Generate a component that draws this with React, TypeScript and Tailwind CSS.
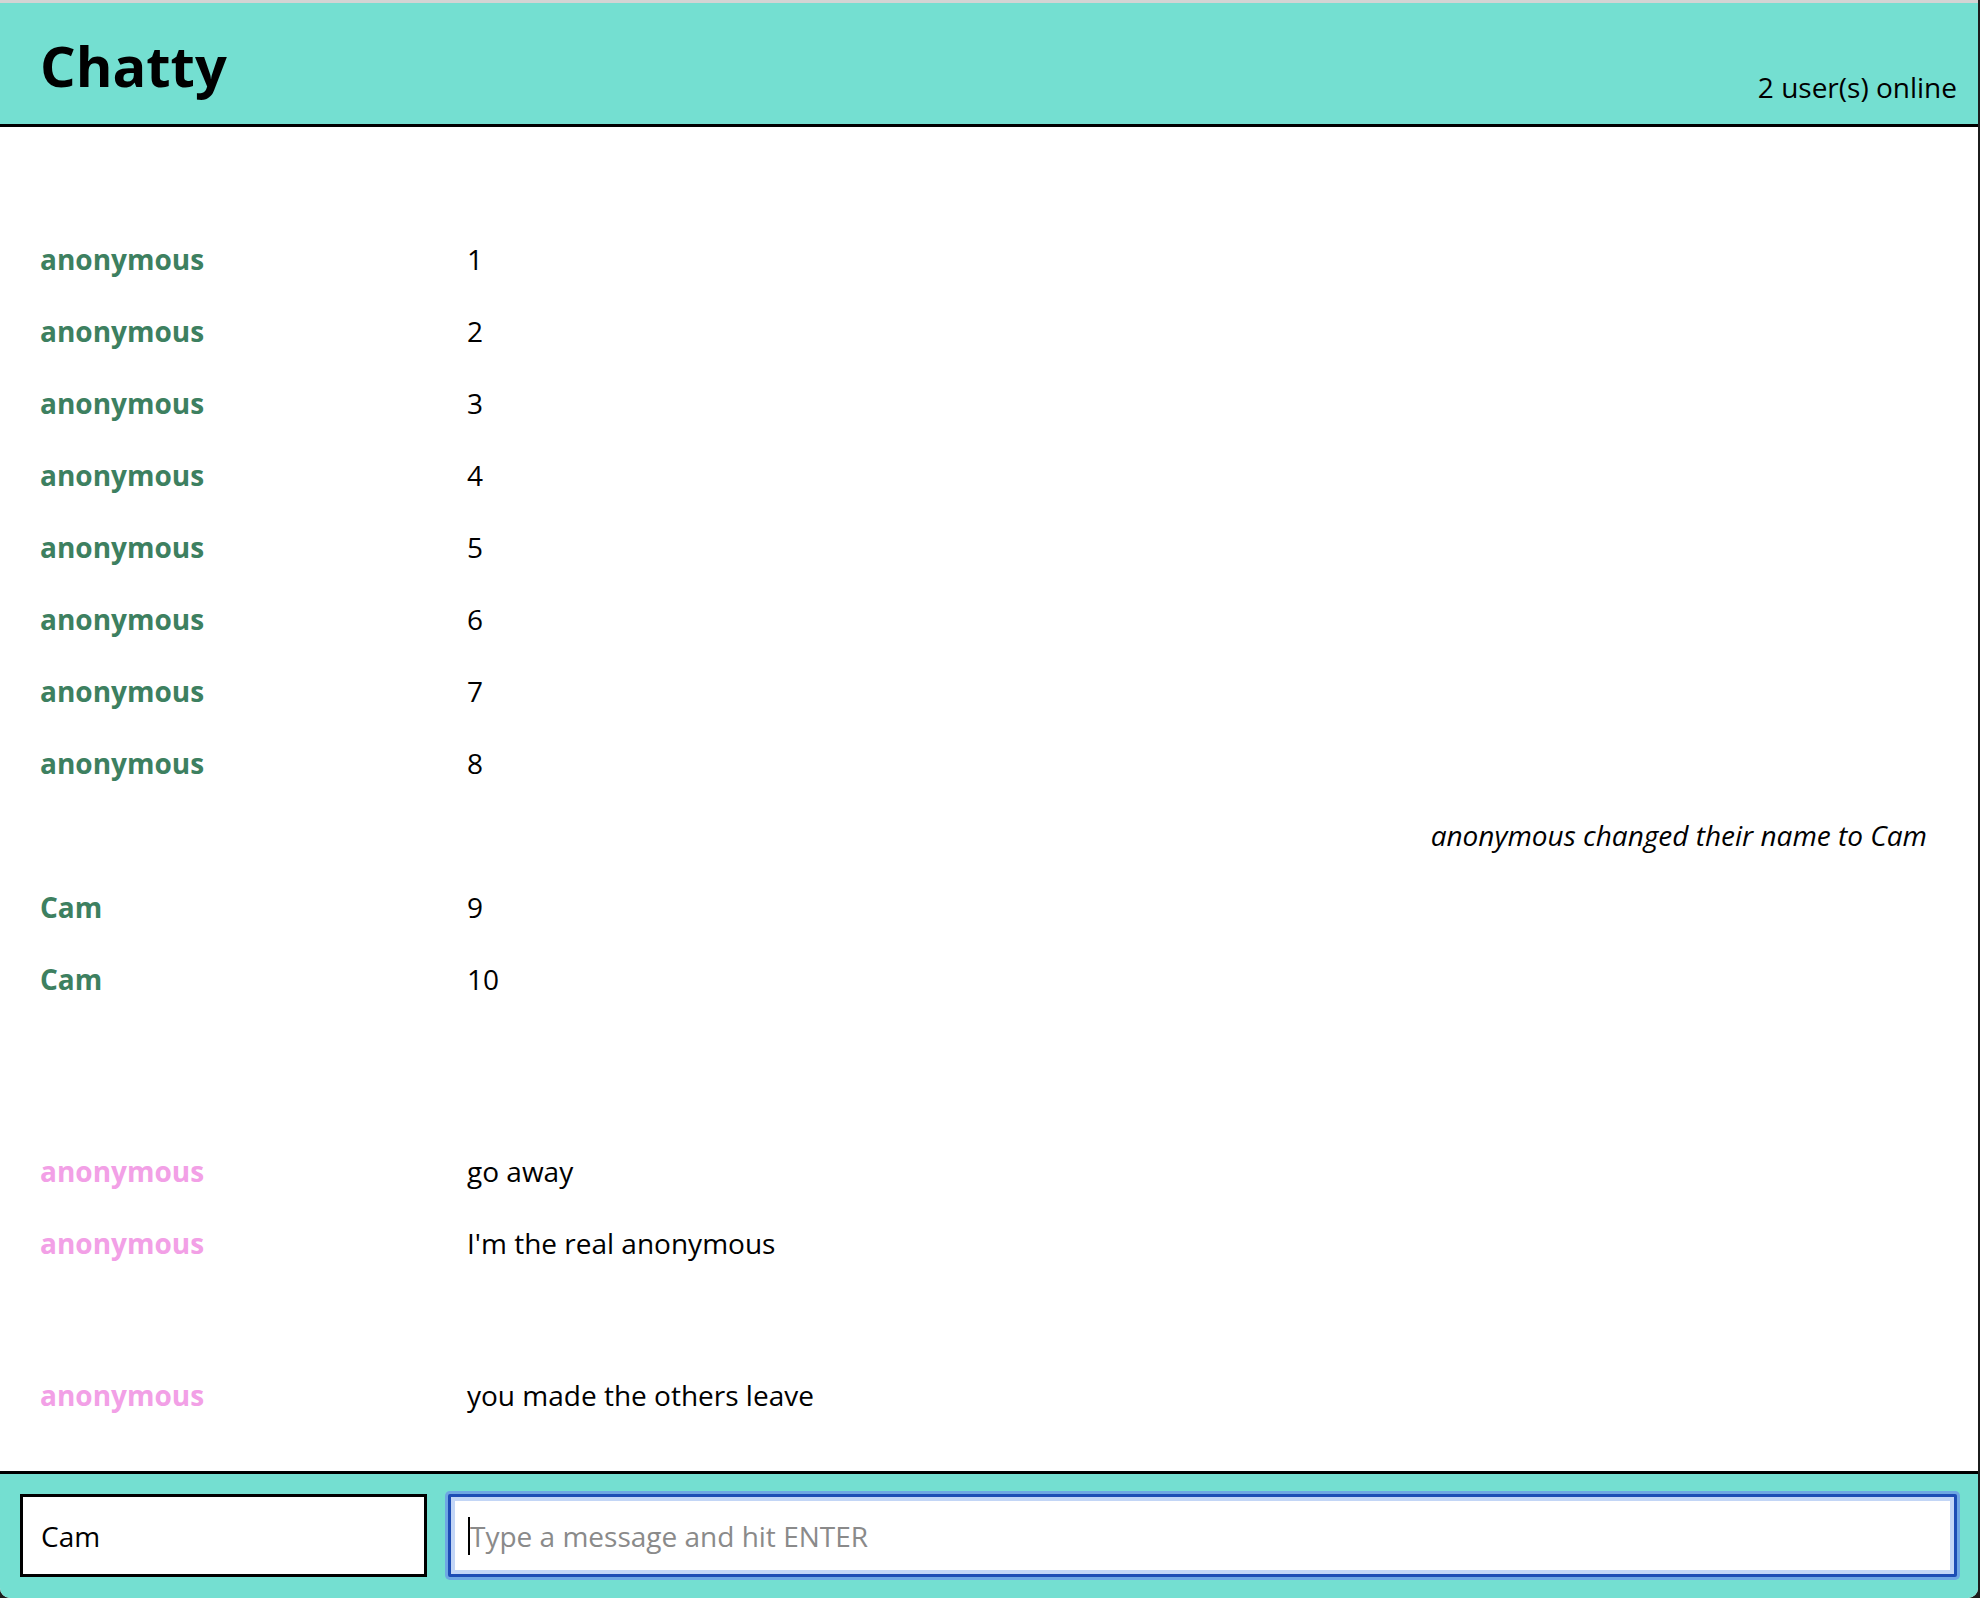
import React from "react";

type Row =
  | { kind: "msg"; name: string; text: string; color: "green" | "pink" }
  | { kind: "sys"; text: string }
  | { kind: "gap"; h: "lg" | "md" };

const rows: Row[] = [
  { kind: "msg", name: "anonymous", text: "1", color: "green" },
  { kind: "msg", name: "anonymous", text: "2", color: "green" },
  { kind: "msg", name: "anonymous", text: "3", color: "green" },
  { kind: "msg", name: "anonymous", text: "4", color: "green" },
  { kind: "msg", name: "anonymous", text: "5", color: "green" },
  { kind: "msg", name: "anonymous", text: "6", color: "green" },
  { kind: "msg", name: "anonymous", text: "7", color: "green" },
  { kind: "msg", name: "anonymous", text: "8", color: "green" },
  { kind: "sys", text: "anonymous changed their name to Cam" },
  { kind: "msg", name: "Cam", text: "9", color: "green" },
  { kind: "msg", name: "Cam", text: "10", color: "green" },
  { kind: "gap", h: "lg" },
  { kind: "msg", name: "anonymous", text: "go away", color: "pink" },
  { kind: "msg", name: "anonymous", text: "I'm the real anonymous", color: "pink" },
  { kind: "gap", h: "md" },
  { kind: "msg", name: "anonymous", text: "you made the others leave", color: "pink" },
];

export default function App() {
  return (
    <div
      className="w-[1980px] h-[1598px] bg-[#1c1c1c] overflow-hidden"
      style={{ fontFamily: '"Open Sans", "Noto Sans", sans-serif' }}
    >
      <div className="w-[1978px] h-[1598px] flex flex-col bg-white rounded-b-[10px] overflow-hidden border-t-[3px] border-[#d4d4d4]">
        <header className="h-[124px] shrink-0 bg-[#74dfd1] border-b-[3px] border-black flex items-start justify-between pl-[40px] pr-[21px]">
          <h1 className="text-[56px] font-bold text-black leading-none mt-[34px]">Chatty</h1>
          <div className="text-[28px] text-black leading-none mt-[70px]">2 user(s) online</div>
        </header>
        <main className="flex-1 pt-[96px] pl-[40px] pr-[51px] overflow-hidden">
          {rows.map((r, i) => {
            if (r.kind === "gap") {
              return <div key={i} className={r.h === "lg" ? "h-[120px]" : "h-[80px]"} />;
            }
            if (r.kind === "sys") {
              return (
                <div key={i} className="h-[72px] flex items-center justify-end text-[28px] italic text-black">
                  {r.text}
                </div>
              );
            }
            return (
              <div key={i} className="h-[72px] flex items-center text-[28px]">
                <span
                  className={
                    "w-[427px] shrink-0 font-bold " +
                    (r.color === "green" ? "text-[#3d8060]" : "text-[#f2a0e6]")
                  }
                >
                  {r.name}
                </span>
                <span className="text-black">{r.text}</span>
              </div>
            );
          })}
        </main>
        <footer className="h-[127px] shrink-0 bg-[#74dfd1] border-t-[3px] border-black flex items-start gap-[21px] pl-[20px] pr-[21px] pt-[20px]">
          <div className="w-[407px] h-[83px] border-[3px] border-black bg-white flex items-center pl-[18px] text-[28px] text-black">
            Cam
          </div>
          <div className="flex-1 h-[83px] border-[3px] border-[#1d4db5] bg-white flex items-center pl-[17px] text-[28px] text-[#8a8a8a] shadow-[0_0_0_3px_#6ea7e3,inset_0_0_0_4px_#c3d6f6] rounded-[2px]">
            <span className="w-[2px] h-[38px] bg-black" />
            Type a message and hit ENTER
          </div>
        </footer>
      </div>
    </div>
  );
}
